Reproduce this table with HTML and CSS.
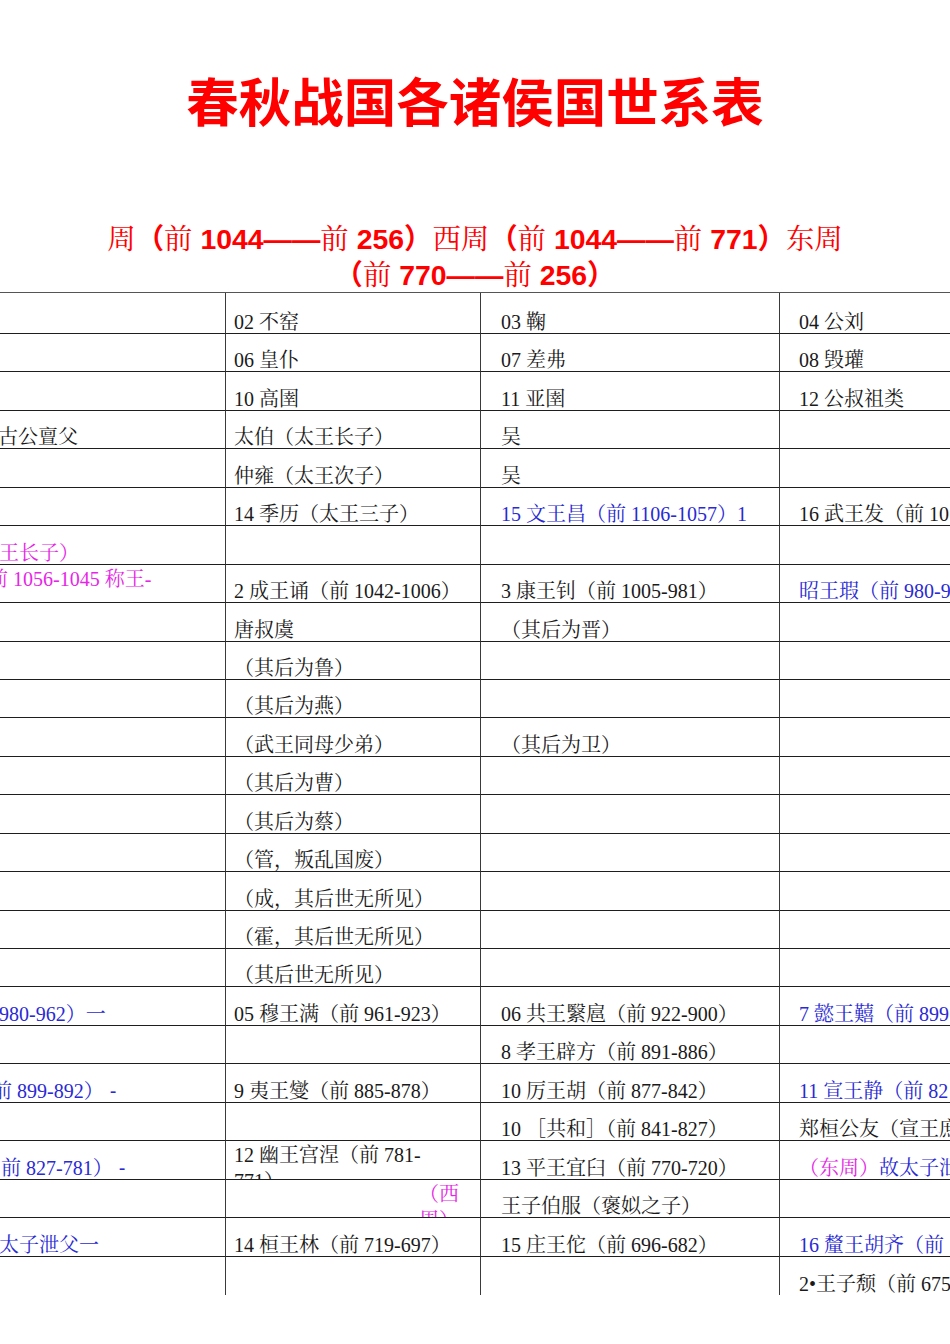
FILE: index.html
```html
<!DOCTYPE html>
<html lang="zh-CN">
<head>
<meta charset="utf-8">
<title>春秋战国各诸侯国世系表</title>
<link rel="stylesheet" href="styles.css">
</head>
<body>
<div class="page">
  <h1 class="title">春秋战国各诸侯国世系表</h1>
  <p class="subtitle"><span class="han">周</span>（<span class="han">前</span> 1044——<span class="han">前</span> 256）<span class="han">西周</span>（<span class="han">前</span> 1044——<span class="han">前</span> 771）<span class="han">东周</span><br>（<span class="han">前</span> 770——<span class="han">前</span> 256）</p>

  <div class="sheet">
    <div class="cell c1"></div><div class="cell c2">02 不窑</div><div class="cell c3">03 鞠</div><div class="cell c4">04 公刘</div>
    <div class="cell c1"></div><div class="cell c2">06 皇仆</div><div class="cell c3">07 差弗</div><div class="cell c4">08 毁瓘</div>
    <div class="cell c1"></div><div class="cell c2">10 高圉</div><div class="cell c3">11 亚圉</div><div class="cell c4">12 公叔祖类</div>
    <div class="cell c1"><span class="cut2">古公亶父</span></div><div class="cell c2">太伯（太王长子）</div><div class="cell c3">吴</div><div class="cell c4"></div>
    <div class="cell c1"></div><div class="cell c2">仲雍（太王次子）</div><div class="cell c3">吴</div><div class="cell c4"></div>
    <div class="cell c1"></div><div class="cell c2">14 季历（太王三子）</div><div class="cell c3 blue">15 文王昌（前 1106-1057）1</div><div class="cell c4">16 武王发（前 10</div>
    <div class="cell c1 mag"><span class="cut1">王长子）</span></div><div class="cell c2"></div><div class="cell c3"></div><div class="cell c4"></div>
    <div class="cell c1 mag top"><span class="cut12">前 1056-1045 称王-</span></div><div class="cell c2">2 成王诵（前 1042-1006）</div><div class="cell c3">3 康王钊（前 1005-981）</div><div class="cell c4 blue">昭王瑕（前 980-9</div>
    <div class="cell c1"></div><div class="cell c2">唐叔虞</div><div class="cell c3">（其后为晋）</div><div class="cell c4"></div>
    <div class="cell c1"></div><div class="cell c2">（其后为鲁）</div><div class="cell c3"></div><div class="cell c4"></div>
    <div class="cell c1"></div><div class="cell c2">（其后为燕）</div><div class="cell c3"></div><div class="cell c4"></div>
    <div class="cell c1"></div><div class="cell c2">（武王同母少弟）</div><div class="cell c3">（其后为卫）</div><div class="cell c4"></div>
    <div class="cell c1"></div><div class="cell c2">（其后为曹）</div><div class="cell c3"></div><div class="cell c4"></div>
    <div class="cell c1"></div><div class="cell c2">（其后为蔡）</div><div class="cell c3"></div><div class="cell c4"></div>
    <div class="cell c1"></div><div class="cell c2">（管，叛乱国废）</div><div class="cell c3"></div><div class="cell c4"></div>
    <div class="cell c1"></div><div class="cell c2">（成，其后世无所见）</div><div class="cell c3"></div><div class="cell c4"></div>
    <div class="cell c1"></div><div class="cell c2">（霍，其后世无所见）</div><div class="cell c3"></div><div class="cell c4"></div>
    <div class="cell c1"></div><div class="cell c2">（其后世无所见）</div><div class="cell c3"></div><div class="cell c4"></div>
    <div class="cell c1 blue"><span class="cut1">980-962）一</span></div><div class="cell c2">05 穆王满（前 961-923）</div><div class="cell c3">06 共王繄扈（前 922-900）</div><div class="cell c4 blue">7 懿王囏（前 899</div>
    <div class="cell c1"></div><div class="cell c2"></div><div class="cell c3">8 孝王辟方（前 891-886）</div><div class="cell c4"></div>
    <div class="cell c1 blue"><span class="cut8">前 899-892）<span class="dash">-</span></span></div><div class="cell c2">9 夷王燮（前 885-878）</div><div class="cell c3">10 厉王胡（前 877-842）</div><div class="cell c4 blue">11 宣王静（前 82</div>
    <div class="cell c1"></div><div class="cell c2"></div><div class="cell c3">10 ［共和］（前 841-827）</div><div class="cell c4">郑桓公友（宣王庶</div>
    <div class="cell c1 blue"><span class="shift1">前 827-781）<span class="dash">-</span></span></div><div class="cell c2 top">12 幽王宫涅（前 781-<br>771）</div><div class="cell c3">13 平王宜臼（前 770-720）</div><div class="cell c4"><span class="mag">（东周）</span><span class="blue">故太子泄</span></div>
    <div class="cell c1"></div><div class="cell c2 top right mag">（西<br>周）</div><div class="cell c3">王子伯服（褒姒之子）</div><div class="cell c4"></div>
    <div class="cell c1 blue"><span class="cut1">太子泄父一</span></div><div class="cell c2">14 桓王林（前 719-697）</div><div class="cell c3">15 庄王佗（前 696-682）</div><div class="cell c4 blue">16 釐王胡齐（前</div>
    <div class="cell c1 last"></div><div class="cell c2 last"></div><div class="cell c3 last"></div><div class="cell c4 last">2•王子颓（前 675</div>
  </div>
</div>
</body>
</html>
```

FILE: styles.css
```css
html, body {
  margin: 0;
  padding: 0;
  background: #ffffff;
}

.page {
  width: 950px;
  height: 1344px;
  overflow: hidden;
}

.title {
  margin: 0;
  padding-top: 73px;
  font-family: "Noto Sans CJK SC", sans-serif;
  font-weight: 700;
  font-size: 52.5px;
  line-height: 52px;
  color: #ff0000;
  text-align: center;
}

.subtitle {
  margin: 95px 0 0;
  font-family: "Liberation Sans", "Noto Sans CJK SC", sans-serif;
  font-weight: 700;
  font-size: 28.4px;
  line-height: 34px;
  color: #ff0000;
  text-align: center;
}

.subtitle .han {
  font-family: "Noto Serif CJK SC", "Noto Sans CJK SC", serif;
  font-weight: 400;
}

.sheet {
  display: grid;
  grid-template-columns: 226px 255px 299px 300px;
  grid-template-rows: 41px repeat(25, 38.44px);
  width: 1080px;
  border-top: 1px solid #555555;
}

.cell {
  box-sizing: border-box;
  display: flex;
  align-items: flex-end;
  overflow: hidden;
  white-space: nowrap;
  border-right: 1px solid #3a3a3a;
  border-bottom: 1px solid #1e1e1e;
  font-family: "Liberation Serif", "Noto Serif CJK SC", "Noto Sans CJK SC", serif;
  font-size: 20px;
  line-height: 22px;
  color: #1a1a1a;
}

.cell.last {
  border-bottom: 0;
}

.c1 { padding-left: 0; }
.c2 { padding-left: 8px; padding-right: 21px; }
.c3 { padding-left: 20px; }
.c4 { padding-left: 19px; border-right: 0; }

.top {
  align-items: flex-start;
  line-height: 26px;
  padding-top: 1px;
}

.right {
  justify-content: flex-end;
  text-align: right;
}

.blue { color: #2a2ad4; }
.mag { color: #e626e6; }

.dash {
  margin-left: 6px;
  font-family: "Liberation Sans", sans-serif;
}

.cut1 { margin-left: -1px; }
.cut2 { margin-left: -2px; }
.cut8 { margin-left: -8px; }
.cut12 { margin-left: -12px; }
.shift1 { margin-left: 1px; }
```
